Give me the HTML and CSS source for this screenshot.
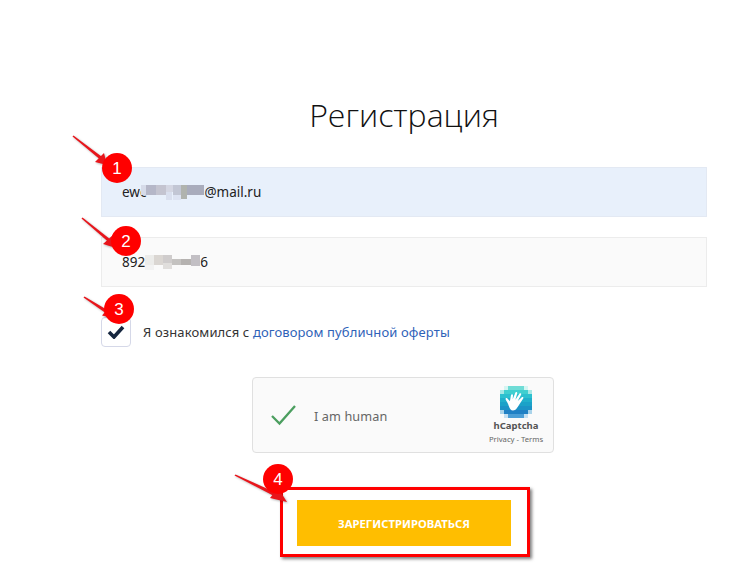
FILE: index.html
```html
<!DOCTYPE html>
<html lang="ru">
<head>
<meta charset="utf-8">
<title>Регистрация</title>
<link rel="stylesheet" href="styles.css">
</head>
<body>
<main class="form">
  <h1 class="title">Регистрация</h1>
  <div class="field field-filled">
    <span class="value">ewc</span><svg class="mosaic mosaic-mail" width="63" height="16" viewBox="0 0 63 16" shape-rendering="crispEdges"><rect x="0" y="1" width="5" height="10" fill="#d6dbe9"/><rect x="5" y="1" width="10" height="10" fill="#b5b7c8"/><rect x="15" y="1" width="10" height="10" fill="#c4c4d0"/><rect x="25" y="1" width="7" height="7" fill="#d4d6e2"/><rect x="32" y="1" width="8" height="10" fill="#c2c6d4"/><rect x="40" y="1" width="6" height="14" fill="#b0b3ae"/><rect x="46" y="1" width="17" height="10" fill="#a9acbc"/><rect x="25" y="8" width="6" height="8" fill="#d9dfee"/><rect x="32" y="11" width="8" height="5" fill="#dde3f2"/></svg><span class="value email-end">@mail.ru</span>
  </div>
  <div class="field field-plain">
    <span class="value">892</span><svg class="mosaic mosaic-phone" width="55" height="16" viewBox="0 0 55 16" shape-rendering="crispEdges"><rect x="0" y="1" width="9" height="10" fill="#ececea"/><rect x="0" y="11" width="9" height="5" fill="#f2f2f2"/><rect x="9" y="1" width="9" height="10" fill="#dad6d2"/><rect x="18" y="1" width="9" height="8" fill="#cfcccc"/><rect x="18" y="9" width="9" height="6" fill="#e0dedc"/><rect x="27" y="5" width="9" height="6" fill="#c4c2c0"/><rect x="36" y="5" width="10" height="6" fill="#b5b2b0"/><rect x="46" y="1" width="9" height="11" fill="#c2bfc4"/></svg><span class="value">6</span>
  </div>
  <label class="agree">
    <span class="checkbox">
      <svg width="18" height="14" viewBox="0 0 18 14"><path d="M2 7l5 5 9-10" fill="none" stroke="#16263f" stroke-width="3.600"/></svg>
    </span>
    <span class="agree-text">Я ознакомился с <a class="link">договором публичной оферты</a></span>
  </label>
  <div class="captcha">
    <svg class="captcha-check" width="28" height="22" viewBox="0 0 28 22"><path d="M2 12l7.500 7.500L25 2" fill="none" stroke="#4b9e5f" stroke-width="2.300"/></svg>
    <span class="captcha-label">I am human</span>
    <div class="brand">
      <svg class="brand-logo" width="32" height="32" viewBox="0 0 32 32" shape-rendering="crispEdges">
        <rect x="8" y="0" width="16" height="4" fill="#6fdcd6"/>
        <rect x="4" y="4" width="24" height="4" fill="#3fcfd0"/>
        <rect x="0" y="8" width="32" height="4" fill="#2cc0cf"/>
        <rect x="0" y="12" width="32" height="4" fill="#20afcb"/>
        <rect x="0" y="16" width="32" height="4" fill="#1ba2c8"/>
        <rect x="0" y="20" width="32" height="4" fill="#1c93c6"/>
        <rect x="4" y="24" width="24" height="4" fill="#2080c4"/>
        <rect x="8" y="28" width="16" height="4" fill="#4b9ed6"/>
        <rect x="4" y="0" width="4" height="4" fill="#d5f5f2"/>
        <rect x="24" y="0" width="4" height="4" fill="#d5f5f2"/>
        <rect x="0" y="4" width="4" height="4" fill="#a8e8e6"/>
        <rect x="28" y="4" width="4" height="4" fill="#a8e8e6"/>
        <rect x="0" y="24" width="4" height="4" fill="#a9d3ea"/>
        <rect x="28" y="24" width="4" height="4" fill="#a9d3ea"/>
        <rect x="4" y="28" width="4" height="4" fill="#c5e0f2"/>
        <rect x="24" y="28" width="4" height="4" fill="#c5e0f2"/>
        <path shape-rendering="auto" fill="#fff" d="M9 20.500C8 17 6 14.500 5.600 13.200c-.3-1 1-1.700 1.800-.8l2.500 2.800L11 9c.3-1.200 2-1 2 .3l-.3 4L15.300 6.700c.5-1.200 2.200-.6 1.900.7l-1.800 6.300 4-6c.7-1 2.200-.2 1.700 1l-3.300 6.300 4-3.800c.9-.8 2.200.3 1.400 1.300L19 19c-1.800 2.500-3 5.500-6 5.500-2.200 0-3.300-1.800-4-4z"/>
      </svg>
      <div class="brand-name">hCaptcha</div>
      <div class="brand-links">Privacy - Terms</div>
    </div>
  </div>
  <div class="submit-frame">
    <button class="submit" type="button">ЗАРЕГИСТРИРОВАТЬСЯ</button>
  </div>
</main>
<svg class="marks" width="740" height="563" viewBox="0 0 740 563">
  <g class="arrow">
    <path d="M72.500 136.500L99.500 159L101.500 156.500L73.500 135.500z"/><path d="M107 165L95 162L104 153z"/>
    <path d="M81.500 218.500L108.500 242L110.500 239.500L82.500 217.500z"/><path d="M116 248L103 244L113 235z"/>
    <path d="M83.500 297.500L107 314L109 311L84.500 296.500z"/><path d="M116 319L102 315.500L110 306z"/>
    <path d="M234.500 475.500L274 496L275.500 492.500L235.500 474.500z"/><path d="M287 502L270 498L278 488z"/>
  </g>
  <circle class="badge" cx="117" cy="168" r="15"/><text class="badge-num" x="117" y="174">1</text>
  <circle class="badge" cx="126" cy="241" r="15"/><text class="badge-num" x="126" y="247">2</text>
  <circle class="badge" cx="119" cy="309" r="15"/><text class="badge-num" x="119" y="315">3</text>
  <circle class="badge" cx="278" cy="479" r="15"/><text class="badge-num" x="278" y="485">4</text>
</svg>
</body>
</html>
```
FILE: styles.css
```css
* { box-sizing: border-box; }
html, body { margin: 0; height: 563px; overflow: hidden; background: #fff; }
body { font-family: "Noto Sans", "Open Sans", sans-serif; color: #1a1a1a; position: relative; }
.form { width: 606px; margin-left: 101px; padding-top: 93px; display: flex; flex-direction: column; }
.title { margin: 0 0 30px; height: 44px; font-family: "Open Sans", "Noto Sans", sans-serif; font-size: 32px; line-height: 44px; font-weight: 300; text-align: center; color: #111; }
.field { height: 50px; padding: 0 20px; border: 1px solid #ececec; display: flex; align-items: center; font-size: 13.500px; color: #222; }
.field-filled { background: #e8f0fb; border-color: #e3e9f3; margin-bottom: 20px; }
.field-plain { background: #fafafa; }
.mosaic { flex: none; }
.mosaic-mail { margin: 0 0 0 -5px; }
.agree { margin-top: 30px; height: 30px; display: flex; align-items: center; gap: 12px; font-size: 13px; letter-spacing: .12px; color: #333; }
.checkbox { width: 30px; height: 30px; border: 1px solid #d5d8e8; border-radius: 4px; display: flex; align-items: center; justify-content: center; background: #fff; }
.link { color: #2f62b8; }
.captcha { width: 302px; height: 76px; margin: 30px 0 0 151px; border: 1px solid #e0e0e0; border-radius: 4px; background: #fafafa; display: flex; align-items: center; padding: 0 9px 0 17px; }
.captcha-check { flex: none; }
.captcha-label { margin: 2px 0 0 16px; font-size: 12.700px; color: #666; letter-spacing: .1px; }
.brand { margin-left: auto; width: 56px; display: flex; flex-direction: column; align-items: center; }
.brand-logo { display: block; }
.brand-name { margin-top: 1px; font-size: 9.500px; line-height: 13px; font-weight: 700; color: #555; }
.brand-links { margin-top: 1px; font-size: 7.700px; line-height: 12px; color: #666; white-space: nowrap; }
.submit-frame { align-self: center; width: 250px; height: 70px; margin: 34px 0 0 2px; padding: 2px 2px 0 0; border: 3px solid #f00; box-shadow: 2px 2px 3px rgba(0,0,0,.5); display: flex; align-items: center; justify-content: center; background: #fff; }
.submit { width: 214px; height: 46px; border: 0; background: #ffbe00; color: #fff; font: 700 11.300px "Noto Sans", sans-serif; padding: 0; }
.marks { position: absolute; left: 0; top: 0; pointer-events: none; }
.arrow path { fill: #e8151b; filter: drop-shadow(1px 1px 1px rgba(0,0,0,.3)); }
.badge { fill: #f00; }
.badge-num { fill: #fff; font-size: 17px; text-anchor: middle; font-family: "Liberation Sans", sans-serif; }
```
